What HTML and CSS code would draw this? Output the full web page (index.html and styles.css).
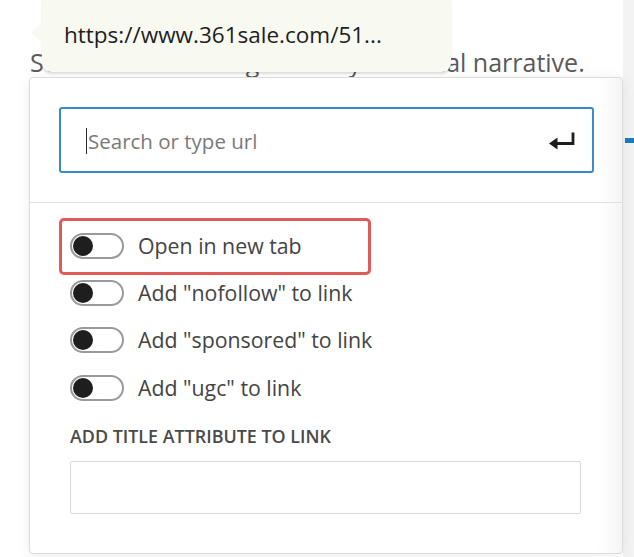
FILE: index.html
```html
<!DOCTYPE html>
<html lang="en">
<head>
<meta charset="utf-8">
<title>Link settings</title>
<link rel="stylesheet" href="styles.css">
</head>
<body>
<div class="page">
  <p class="para">Sometimes an image conveys a visual narrative.</p>

  <div class="sidebar"><span class="sidebar-mark"></span></div>

  <div class="tooltip">https://www.361sale.com/51...</div>

  <div class="popover">
    <div class="search-wrap">
      <div class="search">
        <span class="caret"></span>
        <span class="placeholder">Search or type url</span>
        <svg class="enter" width="28" height="20" viewBox="0 0 28 20" aria-hidden="true">
          <path d="M25 1.5v11H7" fill="none" stroke="#1e1e1e" stroke-width="2.8"/>
          <path d="M1 12.5L9.5 6.5v12z" fill="#1e1e1e"/>
        </svg>
      </div>
    </div>
    <div class="settings">
      <div class="row"><span class="toggle"><span class="knob"></span></span><span class="label">Open in new tab</span></div>
      <div class="row"><span class="toggle"><span class="knob"></span></span><span class="label">Add "nofollow" to link</span></div>
      <div class="row"><span class="toggle"><span class="knob"></span></span><span class="label">Add "sponsored" to link</span></div>
      <div class="row"><span class="toggle"><span class="knob"></span></span><span class="label">Add "ugc" to link</span></div>
      <div class="heading">ADD TITLE ATTRIBUTE TO LINK</div>
      <div class="title-input"></div>
    </div>
    <div class="highlight"></div>
  </div>
</div>
</body>
</html>
```

FILE: styles.css
```css
html, body {
  margin: 0;
  padding: 0;
  background: #ffffff;
}

.page {
  position: relative;
  width: 634px;
  height: 557px;
  overflow: hidden;
  font-family: "Open Sans", "Noto Sans", sans-serif;
  color: #1e1e1e;
}

.para {
  margin: 0;
  padding: 44px 0 0 30px;
  font-size: 25px;
  line-height: 36px;
  color: #5a5a5a;
  white-space: nowrap;
}

.sidebar {
  position: absolute;
  top: 0;
  right: 0;
  width: 11px;
  height: 557px;
  background: #f3f3f3;
}

.sidebar-mark {
  position: absolute;
  top: 138px;
  left: 2px;
  width: 9px;
  height: 5px;
  background: #1a7bc0;
}

.tooltip {
  position: absolute;
  left: 42px;
  top: -8px;
  width: 409px;
  height: 80px;
  box-sizing: border-box;
  padding: 28px 0 0 22px;
  background: #f8f9f1;
  border-radius: 9px;
  box-shadow: 0 2px 2px rgba(0, 0, 0, 0.12);
  font-size: 22.5px;
  line-height: 30px;
  color: #1e1e1e;
  z-index: 3;
}

.tooltip::before {
  content: "";
  position: absolute;
  left: -11px;
  top: 30px;
  border-style: solid;
  border-width: 11px 12px 11px 0;
  border-color: transparent #f8f9f1 transparent transparent;
}

.popover {
  position: absolute;
  left: 29px;
  top: 77px;
  width: 594px;
  height: 477px;
  box-sizing: border-box;
  background: #ffffff;
  border: 1px solid #dcdcdc;
  border-radius: 4px;
  box-shadow: 0 2px 14px rgba(0, 0, 0, 0.07), inset -30px 0 28px -28px rgba(0, 0, 0, 0.08);
  z-index: 2;
}

.search-wrap {
  padding: 29px 28px 29px 29px;
  border-bottom: 1px solid #e0e0e0;
}

.search {
  display: flex;
  align-items: center;
  height: 66px;
  box-sizing: border-box;
  padding: 2px 16px 0 26px;
  border: 2px solid #3a8cc8;
  border-radius: 3px;
}

.caret {
  width: 1px;
  height: 26px;
  margin-left: -1px;
  background: #2a2a2a;
}

.placeholder {
  flex: 1;
  margin-left: 1px;
  font-size: 20.5px;
  color: #7a7a7a;
}

.enter {
  display: block;
}

.settings {
  padding: 19px 40px 0 40px;
}

.row {
  display: flex;
  align-items: center;
  height: 47.3px;
  gap: 14px;
}

.toggle {
  position: relative;
  display: block;
  width: 54px;
  height: 26px;
  box-sizing: border-box;
  border: 2px solid #9a9a9a;
  border-radius: 13px;
  background: #ffffff;
}

.knob {
  position: absolute;
  left: 1px;
  top: 1px;
  width: 20px;
  height: 20px;
  border-radius: 50%;
  background: #1e1e1e;
}

.label {
  font-size: 21.3px;
  line-height: 28px;
  color: #444444;
}

.heading {
  margin-top: 14px;
  font-size: 17.9px;
  line-height: 22px;
  font-weight: 600;
  color: #4a4a4a;
}

.title-input {
  margin-top: 14px;
  width: 511px;
  height: 53px;
  box-sizing: border-box;
  border: 1px solid #dadada;
  border-radius: 2px;
}

.highlight {
  position: absolute;
  left: 29px;
  top: 140px;
  width: 312px;
  height: 57px;
  box-sizing: border-box;
  border: 3px solid #e05a5a;
  border-radius: 5px;
}
```
